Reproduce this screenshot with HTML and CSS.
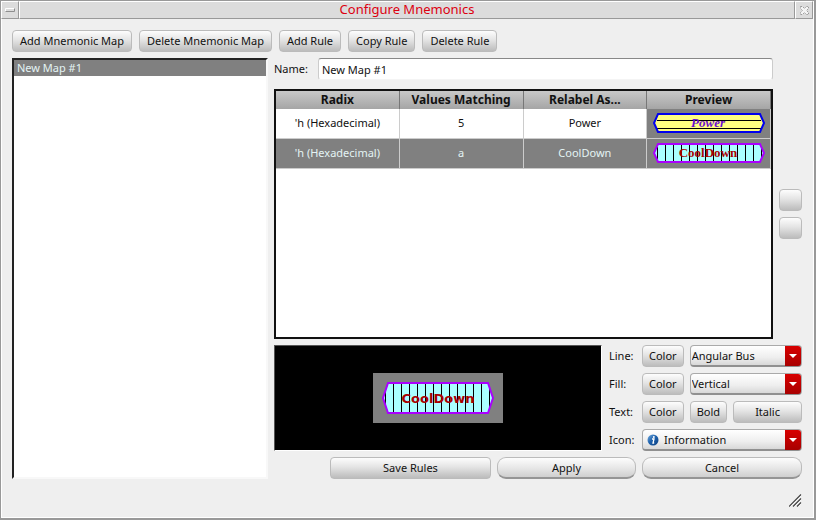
FILE: index.html
```html
<!DOCTYPE html>
<html lang="en">
<head>
<meta charset="utf-8">
<title>Configure Mnemonics</title>
<link rel="stylesheet" href="styles.css">
</head>
<body>
<div class="window">
  <header class="titlebar">
    <button class="title-button" aria-label="Window menu"><svg width="12" height="6" viewBox="0 0 12 6"><path d="M1.500 4.500V1.500H10.500" fill="none" stroke="#fff"/><path d="M1.500 4.500H10.500V1.500" fill="none" stroke="#8e8e8e"/></svg></button>
    <h1 class="title">Configure Mnemonics</h1>
    <button class="title-button" aria-label="Close"><svg width="11" height="11" viewBox="0 0 11 11"><path d="M1.500 1.500h2l2 2 2-2h2v2l-2 2 2 2v2h-2l-2-2-2 2h-2v-2l2-2-2-2z" fill="#f4f4f4" stroke="#999" stroke-dasharray="1.500 1"/></svg></button>
  </header>
  <main class="content">
    <div class="toolbar">
      <button class="btn">Add Mnemonic Map</button>
      <button class="btn">Delete Mnemonic Map</button>
      <button class="btn">Add Rule</button>
      <button class="btn">Copy Rule</button>
      <button class="btn">Delete Rule</button>
    </div>
    <div class="panes">
      <ul class="map-list">
        <li class="map-item">New Map #1</li>
      </ul>
      <section class="editor">
        <div class="rules">
          <div class="rules-main">
            <div class="name-row">
              <label for="name">Name:</label>
              <input class="name-input" id="name" type="text" value="New Map #1">
            </div>
            <div class="table-frame">
              <table class="rule-table">
                <thead>
                  <tr><th>Radix</th><th>Values Matching</th><th>Relabel As...</th><th>Preview</th></tr>
                </thead>
                <tbody>
                  <tr>
                    <td>'h (Hexadecimal)</td><td>5</td><td>Power</td>
                    <td class="preview-cell"><svg class="bus" width="114" height="22" viewBox="0 0 114 22">
                      <path d="M6 2H108L112 11L108 20H6L2 11Z" fill="#ffff80"/>
                      <path d="M5 8.500H109M5 16.500H109" stroke="#000"/>
                      <path d="M6 2H108L112 11L108 20H6L2 11Z" fill="none" stroke="#0000ee" stroke-width="2"/>
                      <text class="bus-text serif italic" x="56" y="15" fill="#6a0dd0">Power</text>
                    </svg></td>
                  </tr>
                  <tr class="selected">
                    <td>'h (Hexadecimal)</td><td>a</td><td>CoolDown</td>
                    <td class="preview-cell"><svg class="bus" width="114" height="22" viewBox="0 0 114 22">
                      <path d="M6 2H108L112 11L108 20H6L2 11Z" fill="#aaffff"/>
                      <path d="M5.500 5V17M13.500 2V20M21.500 2V20M29.500 2V20M37.500 2V20M45.500 2V20M53.500 2V20M61.500 2V20M69.500 2V20M77.500 2V20M85.500 2V20M93.500 2V20M101.500 2V20M109.500 6V16" stroke="#000"/>
                      <path d="M6 2H108L112 11L108 20H6L2 11Z" fill="none" stroke="#aa00ff" stroke-width="2"/>
                      <text class="bus-text serif" x="56" y="15" fill="#aa0000">CoolDown</text>
                    </svg></td>
                  </tr>
                </tbody>
              </table>
            </div>
          </div>
          <div class="order">
            <button class="btn" aria-label="Move rule up"></button>
            <button class="btn" aria-label="Move rule down"></button>
          </div>
        </div>
        <div class="style-row">
          <div class="canvas">
            <div class="swatch"><svg width="114" height="34" viewBox="0 0 114 34">
              <path d="M7 2H107L112 17L107 32H7L2 17Z" fill="#aaffff"/>
              <path d="M4.500 11V23M12.500 2V32M20.500 2V32M28.500 2V32M36.500 2V32M44.500 2V32M52.500 2V32M60.500 2V32M68.500 2V32M76.500 2V32M84.500 2V32M92.500 2V32M100.500 2V32M108.500 8V26" stroke="#000"/>
              <path d="M7 2H107L112 17L107 32H7L2 17Z" fill="none" stroke="#aa00ff" stroke-width="2"/>
              <text class="bus-text large" x="57" y="22" fill="#aa0000">CoolDown</text>
            </svg></div>
          </div>
          <div class="style-form">
            <label for="line">Line:</label>
            <div class="fields">
              <button class="btn">Color</button>
              <div class="combo"><select id="line"><option>Angular Bus</option></select></div>
            </div>
            <label for="fill">Fill:</label>
            <div class="fields">
              <button class="btn">Color</button>
              <div class="combo"><select id="fill"><option>Vertical</option></select></div>
            </div>
            <span>Text:</span>
            <div class="fields">
              <button class="btn">Color</button>
              <button class="btn">Bold</button>
              <button class="btn grow">Italic</button>
            </div>
            <label for="icon">Icon:</label>
            <div class="fields">
              <div class="combo with-icon">
                <svg class="info" width="12" height="12" viewBox="0 0 12 12"><defs><linearGradient id="g" x1="0" y1="0" x2="1" y2="1"><stop offset="0" stop-color="#79afe0"/><stop offset=".45" stop-color="#1f62ad"/><stop offset="1" stop-color="#0b3f80"/></linearGradient></defs><circle cx="6" cy="6" r="5.500" fill="url(#g)"/><circle cx="6.800" cy="2.900" r="1" fill="#fff"/><path d="M5 5H7L6 9H7.200" fill="none" stroke="#fff" stroke-width="1.300"/></svg>
                <select id="icon"><option>Information</option></select>
              </div>
            </div>
          </div>
        </div>
        <div class="actions">
          <button class="btn">Save Rules</button>
          <button class="btn pill">Apply</button>
          <button class="btn pill">Cancel</button>
        </div>
      </section>
    </div>
    <div class="grip"><svg width="13" height="13" viewBox="0 0 13 13"><path d="M0 12.500L12 .5M4 12.500L12 4.500M8 12.500L12 8.500" stroke="#444" stroke-width="1.200"/><path d="M1.500 12.500L12.500 1.500M5.500 12.500L12.500 5.500M9.500 12.500L12.500 9.500" stroke="#fff" stroke-width=".6"/></svg></div>
  </main>
</div>
</body>
</html>
```

FILE: styles.css
```css
* {
  box-sizing: border-box;
}

body {
  margin: 0;
  background: #efefef;
  color: #111;
  font: 11px/16px "Noto Sans", "Open Sans", sans-serif;
}

button,
input,
select {
  font: inherit;
  color: inherit;
}

.window {
  display: flex;
  flex-direction: column;
  min-height: 100vh;
  border: 1px solid #999;
  border-width: 1px 2px 2px 1px;
  box-shadow: inset -1px -1px #fff, inset 1px 1px #fff;
}

.titlebar {
  display: flex;
  height: 18px;
  margin-right: 1px;
}

.title,
.title-button {
  margin: 0;
  background: #dcdcdc;
  border: 1px solid;
  border-color: #fff #999 #999 #fff;
}

.title {
  flex: 1;
  color: #dd0010;
  font-size: 13px;
  line-height: 14px;
  font-weight: 400;
  text-align: center;
}

.title-button {
  display: flex;
  align-items: center;
  justify-content: center;
  width: 18px;
  padding: 0;
}

.content {
  flex: 1;
  display: flex;
  flex-direction: column;
  padding: 11px 12px 11px 11px;
}

.toolbar {
  display: flex;
  gap: 7px;
  margin-bottom: 6px;
}

.btn {
  height: 22px;
  padding: 0 6px;
  border: 1px solid #bbb;
  border-radius: 4px;
  background: linear-gradient(#fdfdfd, #e4e4e4 45%, #bcbcbc);
  line-height: 20px;
  white-space: nowrap;
}

.toolbar .btn {
  padding: 0 7px;
}

.pill {
  border-radius: 9px;
  border-bottom: 2px solid #959595;
  background: linear-gradient(#fdfdfd, #e8e8e8 50%, #cfcfcf);
}

.panes {
  flex: 1;
  display: grid;
  grid-template-columns: 256px 1fr;
  gap: 6px;
}

.map-list {
  margin: 0;
  padding: 0;
  list-style: none;
  background: #fff;
  border: 2px solid;
  border-color: #222 #f8f8f8 #f8f8f8 #222;
}

.map-item {
  padding: 0 3px;
  background: #808080;
  color: #e4f4f4;
}

.editor {
  display: flex;
  flex-direction: column;
  gap: 6px;
}

.rules {
  flex: 1;
  display: flex;
  gap: 6px;
}

.rules-main {
  flex: 1;
  display: flex;
  flex-direction: column;
  gap: 9px;
}

.name-row {
  display: flex;
  align-items: center;
  gap: 10px;
}

.name-input {
  flex: 1;
  height: 22px;
  padding: 0 3px;
  border: 1px solid;
  border-color: #888 #ccc #f4f4f4 #ccc;
  border-radius: 3px;
  background: #fff;
}

.table-frame {
  flex: 1;
  border: 2px solid #111;
  background: #fff;
}

.rule-table {
  width: 100%;
  table-layout: fixed;
  border-collapse: separate;
  border-spacing: 0;
  text-align: center;
}

.rule-table th {
  height: 18px;
  padding: 0;
  border-right: 1px solid #777;
  background: linear-gradient(#c8c8c8, #a5a5a5);
  font-size: 12px;
  line-height: 16px;
}

.rule-table td {
  height: 30px;
  padding: 0 0 1px;
  border-right: 1px solid #ccc;
  border-bottom: 1px solid #ccc;
}

.selected td,
.rule-table .preview-cell {
  background: #808080;
}

.selected td {
  color: #e4f4f4;
}

.bus {
  display: block;
  margin: 0 auto;
}

.bus-text {
  font-weight: 700;
  font-size: 13px;
  text-anchor: middle;
}

.large {
  font-family: "DejaVu Sans", sans-serif;
}

.serif {
  font-family: "Liberation Serif", serif;
}

.italic {
  font-style: italic;
}

.order {
  display: flex;
  flex-direction: column;
  justify-content: center;
  gap: 6px;
  width: 23px;
  padding-top: 30px;
}

.style-row {
  display: grid;
  grid-template-columns: 1fr 193px;
  gap: 7px;
}

.canvas {
  display: flex;
  align-items: center;
  justify-content: center;
  height: 106px;
  background: #000;
  border: 1px solid;
  border-color: #555 #fff #fff #555;
}

.swatch {
  display: flex;
  align-items: center;
  justify-content: center;
  width: 130px;
  height: 50px;
  background: #808080;
}

.style-form {
  display: grid;
  grid-template-columns: auto 160px;
  align-items: center;
  justify-content: space-between;
  gap: 6px 0;
}

.fields {
  display: flex;
  gap: 6px;
}

.grow {
  flex: 1;
}

.combo {
  position: relative;
  flex: 1;
}

.combo select {
  appearance: none;
  display: block;
  width: 100%;
  height: 22px;
  padding: 0 18px 0 1px;
  border: 1px solid #aaa;
  border-bottom: 2px solid #909090;
  border-radius: 4px;
  background: linear-gradient(#fff, #eee 60%, #d8d8d8);
}

.combo.with-icon select {
  padding-left: 21px;
}

.combo::before {
  content: "";
  position: absolute;
  inset: 1px 1px 1px auto;
  width: 16px;
  border-radius: 0 3px 3px 0;
  background: linear-gradient(#d80000, #a80000);
  pointer-events: none;
}

.combo::after {
  content: "";
  position: absolute;
  right: 5px;
  top: 9px;
  border: 4px solid transparent;
  border-top-color: #fff;
  border-bottom: 0;
  pointer-events: none;
}

.info {
  position: absolute;
  left: 5px;
  top: 5px;
  pointer-events: none;
}

.actions {
  display: grid;
  grid-template-columns: 161fr 139fr 160fr;
  gap: 6px;
  margin-left: 56px;
}

.grip {
  display: flex;
  justify-content: flex-end;
  margin-top: 15px;
}
```
